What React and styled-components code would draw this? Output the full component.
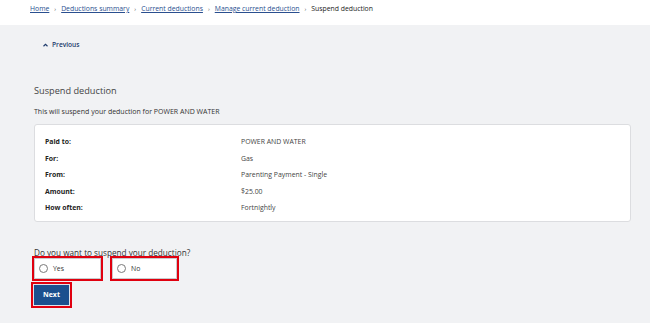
import React from "react";
import styled, { createGlobalStyle } from "styled-components";

const Global = createGlobalStyle`
  html, body { margin: 0; padding: 0; background: #f1f2f4; }
  body { font-family: "Open Sans", "Noto Sans", sans-serif; color: #333; }
  #root { min-height: 323px; }
`;

const Header = styled.header`
  background: #fff;
  height: 25px;
  box-sizing: border-box;
  display: flex;
  align-items: flex-start;
  padding: 4px 0 0 30px;
`;

const Crumbs = styled.nav`
  display: flex;
  align-items: center;
  font-size: 6.85px;
  line-height: 10px;
  gap: 5px;
`;

const CrumbLink = styled.a`
  color: #2a4f8f;
  text-decoration: underline;
  text-underline-offset: 1px;
`;

const Sep = styled.span`
  color: #555;
  font-size: 6px;
`;

const Current = styled.span`
  color: #222;
`;

const Main = styled.main`
  padding: 0 19px 0 34px;
`;

const PrevLink = styled.a`
  display: inline-flex;
  align-items: center;
  gap: 4px;
  margin: 15px 0 0 9px;
  height: 9px;
  font-size: 6.6px;
  font-weight: 600;
  color: #1d3a6b;
`;

const Heading = styled.h1`
  margin: 33px 0 0;
  font-size: 9.2px;
  font-weight: 400;
  color: #444;
  line-height: 12px;
`;

const Lead = styled.p`
  margin: 10px 0 0;
  font-size: 7px;
  line-height: 9px;
  color: #333;
`;

const Card = styled.section`
  margin-top: 8px;
  background: #fff;
  border: 1px solid #dcdde0;
  border-radius: 3px;
  height: 98px;
  box-sizing: border-box;
  padding: 9px 10px 0;
  display: grid;
  grid-template-columns: 196px 1fr;
  grid-auto-rows: 16.5px;
  align-items: center;
  font-size: 6.9px;
`;

const Label = styled.div`
  font-weight: 700;
  color: #222;
`;

const Value = styled.div`
  color: #444;
`;

const Question = styled.div`
  margin-top: 25px;
  font-size: 8.2px;
  line-height: 11px;
  color: #333;
`;

const Options = styled.div`
  display: flex;
  gap: 11px;
  margin-top: 0;
`;

const Option = styled.label`
  width: ${(p) => p.$w}px;
  height: 21px;
  box-sizing: border-box;
  background: #fff;
  border: 1px solid #c9cacd;
  outline: 2px solid #e0000f;
  display: flex;
  align-items: center;
  gap: 5px;
  padding-left: 4px;
  font-size: 6.9px;
  color: #333;
`;

const Radio = styled.span`
  width: 9px;
  height: 9px;
  box-sizing: border-box;
  border: 1px solid #7a7a7a;
  border-radius: 50%;
  background: #fff;
`;

const NextButton = styled.button`
  display: block;
  margin: 6px 0 0 0;
  width: 35px;
  height: 20px;
  background: #1b4f8e;
  color: #fff;
  border: none;
  font-family: inherit;
  font-size: 7px;
  font-weight: 700;
  padding: 0;
  box-shadow: 0 0 0 1px #dfe3ea;
  outline: 2px solid #e0000f;
  outline-offset: 1px;
`;

export default function App() {
  return (
    <>
      <Global />
      <Header>
        <Crumbs>
          <CrumbLink>Home</CrumbLink>
          <Sep>›</Sep>
          <CrumbLink>Deductions summary</CrumbLink>
          <Sep>›</Sep>
          <CrumbLink>Current deductions</CrumbLink>
          <Sep>›</Sep>
          <CrumbLink>Manage current deduction</CrumbLink>
          <Sep>›</Sep>
          <Current>Suspend deduction</Current>
        </Crumbs>
      </Header>
      <Main>
        <PrevLink>
          <svg width="5" height="4" viewBox="0 0 10 7">
            <path d="M1 6 L5 2 L9 6" fill="none" stroke="#1d3a6b" strokeWidth="2.2" />
          </svg>
          Previous
        </PrevLink>
        <Heading>Suspend deduction</Heading>
        <Lead>This will suspend your deduction for POWER AND WATER</Lead>
        <Card>
          <Label>Paid to:</Label>
          <Value>POWER AND WATER</Value>
          <Label>For:</Label>
          <Value>Gas</Value>
          <Label>From:</Label>
          <Value>Parenting Payment - Single</Value>
          <Label>Amount:</Label>
          <Value>$25.00</Value>
          <Label>How often:</Label>
          <Value>Fortnightly</Value>
        </Card>
        <Question>Do you want to suspend your deduction?</Question>
        <Options>
          <Option $w={67}>
            <Radio />
            Yes
          </Option>
          <Option $w={65}>
            <Radio />
            No
          </Option>
        </Options>
        <NextButton>Next</NextButton>
      </Main>
    </>
  );
}
